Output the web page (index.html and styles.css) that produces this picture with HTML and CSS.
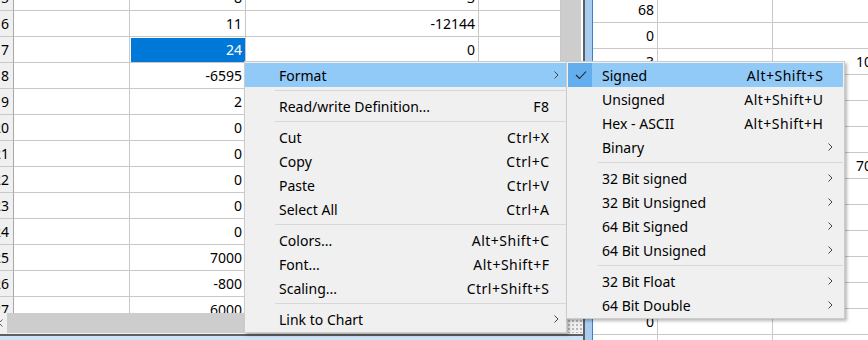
FILE: index.html
```html
<!DOCTYPE html>
<html>
<head>
<meta charset="utf-8">
<link rel="stylesheet" href="styles.css">
</head>
<body>
<div class="app">
  <section class="left">
    <div class="left-main">
      <div class="sheet">
        <div class="sheet-inner">
          <div class="row"><div class="cell hdr">15</div><div class="cell c1"></div><div class="cell c2">8</div><div class="cell c3">3</div><div class="cell c4"></div></div>
          <div class="row"><div class="cell hdr">16</div><div class="cell c1"></div><div class="cell c2">11</div><div class="cell c3">-12144</div><div class="cell c4"></div></div>
          <div class="row"><div class="cell hdr">17</div><div class="cell c1"></div><div class="cell c2 sel">24</div><div class="cell c3">0</div><div class="cell c4"></div></div>
          <div class="row"><div class="cell hdr">18</div><div class="cell c1"></div><div class="cell c2">-6595</div><div class="cell c3">0</div><div class="cell c4"></div></div>
          <div class="row"><div class="cell hdr">19</div><div class="cell c1"></div><div class="cell c2">2</div><div class="cell c3">0</div><div class="cell c4"></div></div>
          <div class="row"><div class="cell hdr">20</div><div class="cell c1"></div><div class="cell c2">0</div><div class="cell c3">0</div><div class="cell c4"></div></div>
          <div class="row"><div class="cell hdr">21</div><div class="cell c1"></div><div class="cell c2">0</div><div class="cell c3">0</div><div class="cell c4"></div></div>
          <div class="row"><div class="cell hdr">22</div><div class="cell c1"></div><div class="cell c2">0</div><div class="cell c3">0</div><div class="cell c4"></div></div>
          <div class="row"><div class="cell hdr">23</div><div class="cell c1"></div><div class="cell c2">0</div><div class="cell c3">0</div><div class="cell c4"></div></div>
          <div class="row"><div class="cell hdr">24</div><div class="cell c1"></div><div class="cell c2">0</div><div class="cell c3">0</div><div class="cell c4"></div></div>
          <div class="row"><div class="cell hdr">25</div><div class="cell c1"></div><div class="cell c2">7000</div><div class="cell c3">0</div><div class="cell c4"></div></div>
          <div class="row"><div class="cell hdr">26</div><div class="cell c1"></div><div class="cell c2">-800</div><div class="cell c3">0</div><div class="cell c4"></div></div>
          <div class="row"><div class="cell hdr">27</div><div class="cell c1"></div><div class="cell c2">6000</div><div class="cell c3">0</div><div class="cell c4"></div></div>
          <div class="row"><div class="cell hdr">28</div><div class="cell c1"></div><div class="cell c2">0</div><div class="cell c3">0</div><div class="cell c4"></div></div>
        </div>
      </div>
      <div class="vscroll"></div>
    </div>
    <div class="left-bottom">
      <div class="hscroll">
        <div class="harrow"><svg width="5" height="8" viewBox="0 0 5 8"><path d="M4.5 0.5 L1 4 L4.5 7.5" fill="none" stroke="#606060" stroke-width="1"/></svg></div>
        <div class="hthumb"></div>
      </div>
      <div class="grip"></div>
    </div>
    <div class="frame-bottom"></div>
  </section>
  <div class="divider"></div>
  <section class="right">
    <div class="rsheet">
      <div class="row"><div class="cell ra">68</div><div class="cell rb"></div><div class="cell rc"></div></div>
      <div class="row"><div class="cell ra">0</div><div class="cell rb"></div><div class="cell rc"></div></div>
      <div class="row"><div class="cell ra">3</div><div class="cell rb"></div><div class="cell rc">10000</div></div>
      <div class="row"><div class="cell ra">0</div><div class="cell rb"></div><div class="cell rc"></div></div>
      <div class="row"><div class="cell ra">0</div><div class="cell rb"></div><div class="cell rc"></div></div>
      <div class="row"><div class="cell ra">0</div><div class="cell rb"></div><div class="cell rc"></div></div>
      <div class="row"><div class="cell ra">0</div><div class="cell rb"></div><div class="cell rc">70000</div></div>
      <div class="row"><div class="cell ra">0</div><div class="cell rb"></div><div class="cell rc"></div></div>
      <div class="row"><div class="cell ra">0</div><div class="cell rb"></div><div class="cell rc"></div></div>
      <div class="row"><div class="cell ra">0</div><div class="cell rb"></div><div class="cell rc"></div></div>
      <div class="row"><div class="cell ra">0</div><div class="cell rb"></div><div class="cell rc"></div></div>
      <div class="row"><div class="cell ra">0</div><div class="cell rb"></div><div class="cell rc"></div></div>
      <div class="row"><div class="cell ra">0</div><div class="cell rb"></div><div class="cell rc"></div></div>
      <div class="row"><div class="cell ra"></div><div class="cell rb"></div><div class="cell rc"></div></div>
    </div>
  </section>
</div>

<div class="menu ctx">
  <div class="item hot"><span class="gutter"></span><span class="label">Format</span><svg class="chev" width="5" height="8" viewBox="0 0 5 8"><path d="M0.5 0.5 L4 4 L0.5 7.5" fill="none" stroke="#444" stroke-width="1"/></svg></div>
  <div class="sep"></div>
  <div class="item"><span class="gutter"></span><span class="label">Read/write Definition...</span><span class="key">F8</span></div>
  <div class="sep"></div>
  <div class="item"><span class="gutter"></span><span class="label">Cut</span><span class="key">Ctrl+X</span></div>
  <div class="item"><span class="gutter"></span><span class="label">Copy</span><span class="key">Ctrl+C</span></div>
  <div class="item"><span class="gutter"></span><span class="label">Paste</span><span class="key">Ctrl+V</span></div>
  <div class="item"><span class="gutter"></span><span class="label">Select All</span><span class="key">Ctrl+A</span></div>
  <div class="sep"></div>
  <div class="item"><span class="gutter"></span><span class="label">Colors...</span><span class="key">Alt+Shift+C</span></div>
  <div class="item"><span class="gutter"></span><span class="label">Font...</span><span class="key">Alt+Shift+F</span></div>
  <div class="item"><span class="gutter"></span><span class="label">Scaling...</span><span class="key">Ctrl+Shift+S</span></div>
  <div class="sep"></div>
  <div class="item"><span class="gutter"></span><span class="label">Link to Chart</span><svg class="chev" width="5" height="8" viewBox="0 0 5 8"><path d="M0.5 0.5 L4 4 L0.5 7.5" fill="none" stroke="#444" stroke-width="1"/></svg></div>
</div>

<div class="menu sub">
  <div class="item hot"><span class="gutter"><span class="checkbox"><svg width="12" height="10" viewBox="0 0 12 10"><path d="M1 5 L4.5 8.5 L11 1.5" fill="none" stroke="#222" stroke-width="1.1"/></svg></span></span><span class="label">Signed</span><span class="key">Alt+Shift+S</span></div>
  <div class="item"><span class="gutter"></span><span class="label">Unsigned</span><span class="key">Alt+Shift+U</span></div>
  <div class="item"><span class="gutter"></span><span class="label">Hex - ASCII</span><span class="key">Alt+Shift+H</span></div>
  <div class="item"><span class="gutter"></span><span class="label">Binary</span><svg class="chev" width="5" height="8" viewBox="0 0 5 8"><path d="M0.5 0.5 L4 4 L0.5 7.5" fill="none" stroke="#444" stroke-width="1"/></svg></div>
  <div class="sep"></div>
  <div class="item"><span class="gutter"></span><span class="label">32 Bit signed</span><svg class="chev" width="5" height="8" viewBox="0 0 5 8"><path d="M0.5 0.5 L4 4 L0.5 7.5" fill="none" stroke="#444" stroke-width="1"/></svg></div>
  <div class="item"><span class="gutter"></span><span class="label">32 Bit Unsigned</span><svg class="chev" width="5" height="8" viewBox="0 0 5 8"><path d="M0.5 0.5 L4 4 L0.5 7.5" fill="none" stroke="#444" stroke-width="1"/></svg></div>
  <div class="item"><span class="gutter"></span><span class="label">64 Bit Signed</span><svg class="chev" width="5" height="8" viewBox="0 0 5 8"><path d="M0.5 0.5 L4 4 L0.5 7.5" fill="none" stroke="#444" stroke-width="1"/></svg></div>
  <div class="item"><span class="gutter"></span><span class="label">64 Bit Unsigned</span><svg class="chev" width="5" height="8" viewBox="0 0 5 8"><path d="M0.5 0.5 L4 4 L0.5 7.5" fill="none" stroke="#444" stroke-width="1"/></svg></div>
  <div class="sep"></div>
  <div class="item"><span class="gutter"></span><span class="label">32 Bit Float</span><svg class="chev" width="5" height="8" viewBox="0 0 5 8"><path d="M0.5 0.5 L4 4 L0.5 7.5" fill="none" stroke="#444" stroke-width="1"/></svg></div>
  <div class="item"><span class="gutter"></span><span class="label">64 Bit Double</span><svg class="chev" width="5" height="8" viewBox="0 0 5 8"><path d="M0.5 0.5 L4 4 L0.5 7.5" fill="none" stroke="#444" stroke-width="1"/></svg></div>
</div>
</body>
</html>
```

FILE: styles.css
```css
* { box-sizing: border-box; }
html, body { margin: 0; padding: 0; }
body {
  width: 868px;
  height: 340px;
  overflow: hidden;
  position: relative;
  background: #ffffff;
  font-family: "Noto Sans", "Open Sans", sans-serif;
  font-size: 14px;
  color: #000;
}
.app { display: flex; height: 340px; }

/* left window */
.left { width: 583px; flex: none; display: flex; flex-direction: column; }
.left-main { display: flex; height: 313px; }
.sheet { width: 561px; overflow: hidden; flex: none; }
.sheet-inner { margin-top: -15px; margin-left: -27px; }
.row { display: flex; height: 26px; }
.cell {
  flex: none;
  height: 26px;
  border-right: 1px solid #c8c8c8;
  border-bottom: 1px solid #c8c8c8;
  text-align: right;
  padding-right: 3px;
  padding-top: 1px;
  line-height: 24px;
  white-space: nowrap;
  overflow: hidden;
}
.hdr { width: 41px; background: #f0f0f0; border-right-color: #a8a8a8; border-bottom-color: #c8c8c8; padding-right: 4px; }
.c1 { width: 116px; }
.c2 { width: 116px; }
.c3 { width: 233px; }
.c4 { flex: 1; }
.sel { background: #0078d7; color: #fff; box-shadow: inset 1px 1px 0 #fff; }
.vscroll { width: 20px; background: #cdcdcd; flex: none; }
.left-bottom { display: flex; height: 20px; }
.hscroll { width: 561px; display: flex; background: #f0f0f0; }
.harrow { width: 9px; display: flex; align-items: center; margin-left: -2px; }
.hthumb { flex: 1; background: #cdcdcd; }
.grip {
  flex: 1;
  background-color: #f0f0f0;
  background-image: radial-gradient(circle, #b8b8b8 0.8px, transparent 1px);
  background-size: 4px 4px;
  background-position: 6px 2px;
}
.frame-bottom {
  flex: 1;
  border-top: 1px solid #f0f0f0;
  background: #cfe3f6;
  box-shadow: inset 0 2px 0 #5f5f5f;
}

.divider {
  width: 10px;
  flex: none;
  background: #a9cdf0;
  border-left: 2px solid #5f5f5f;
  border-right: 1px solid #3f7fc4;
}

/* right window */
.right { flex: 1; overflow: hidden; }
.rsheet { margin-top: -3px; }
.ra { width: 65px; }
.rb { width: 115px; }
.rc { width: 127px; }

/* menus */
.menu {
  position: absolute;
  background: #f0f0f0;
  border: 1px solid #cccccc;
  padding: 1px 0;
  box-shadow: 2px 2px 3px rgba(0, 0, 0, 0.28);
}
.ctx { left: 244px; top: 61px; width: 323px; }
.sub { left: 566px; top: 61px; width: 279px; padding: 1px; }
.item {
  display: flex;
  align-items: center;
  height: 24px;
  padding-right: 17px;
  white-space: nowrap;
}
.sub .item { padding-right: 20px; }
.item.hot { background: #91c9f7; }
.gutter { width: 34px; flex: none; align-self: stretch; display: flex; }
.checkbox {
  width: 24px;
  background: #62aeee;
  display: flex;
  align-items: center;
  justify-content: center;
  padding-left: 1px;
}
.label { flex: 1; }
.key { flex: none; letter-spacing: 0.5px; margin-right: -0.5px; }
.chev { flex: none; margin-right: -10px; }
.sep { height: 7px; margin-left: 30px; padding-top: 3px; }
.sep::before { content: ""; display: block; height: 1px; background: #d7d7d7; }
```
